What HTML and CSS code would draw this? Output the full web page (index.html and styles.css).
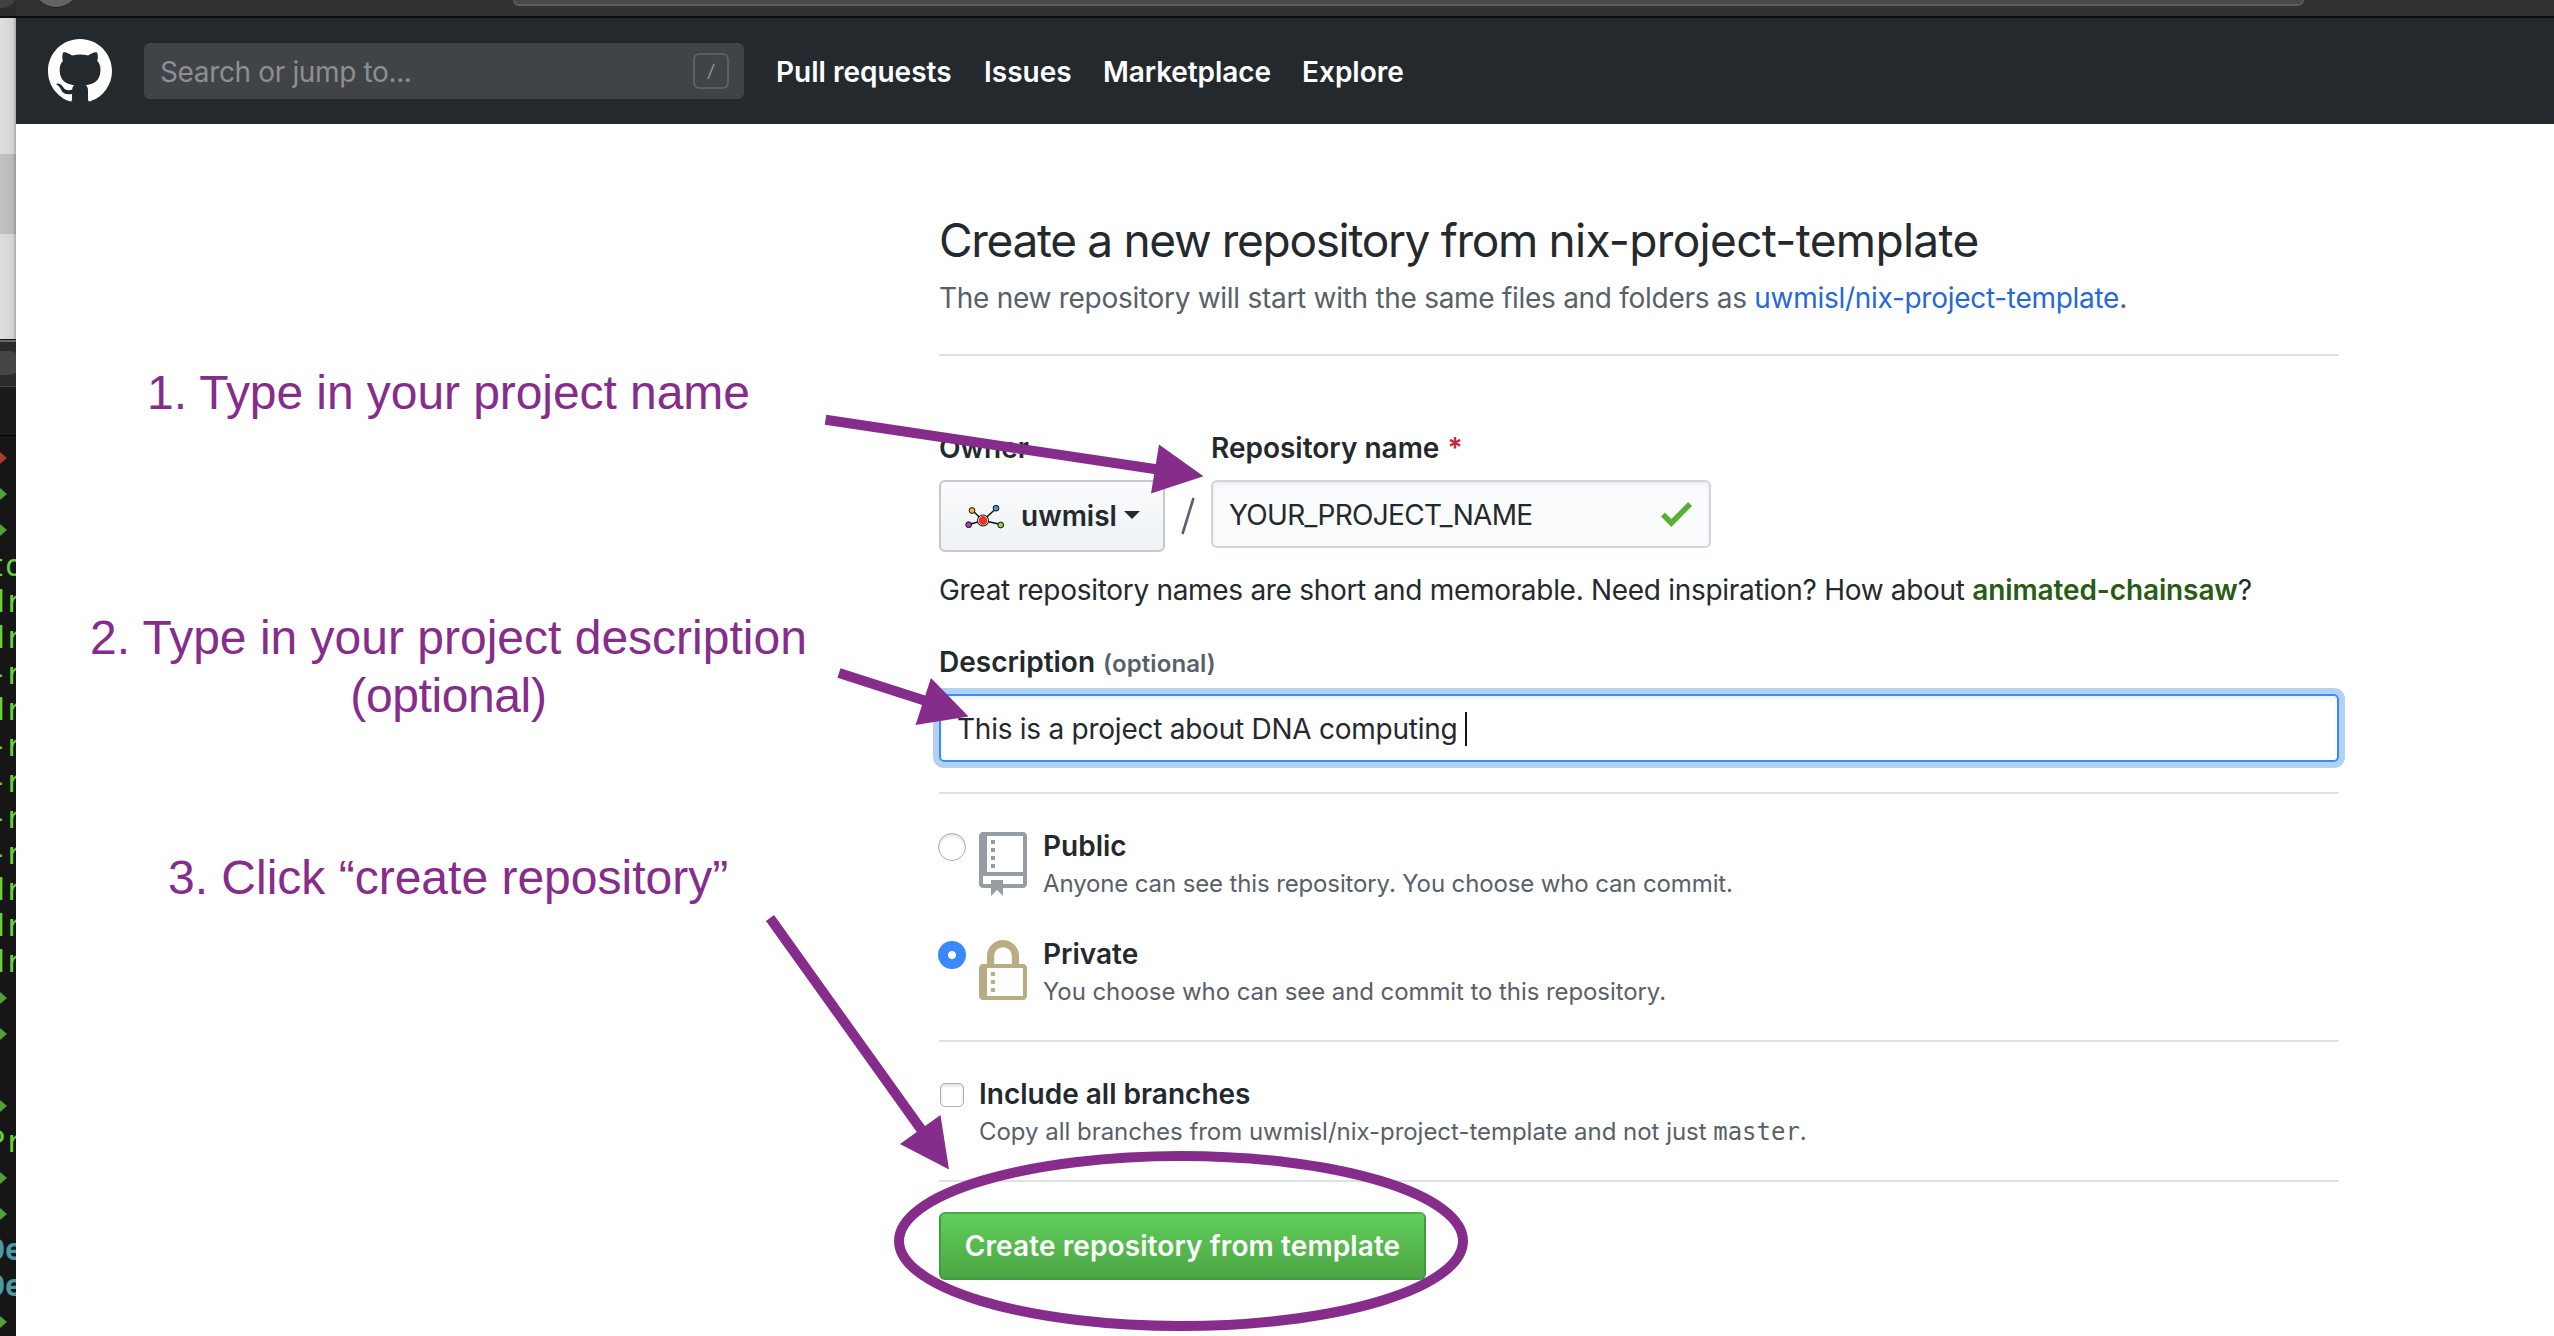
FILE: index.html
```html
<!DOCTYPE html>
<html lang="en">
<head>
<meta charset="utf-8">
<title>Create a new repository from nix-project-template</title>
<link rel="stylesheet" href="styles.css">
</head>
<body>
<div class="desktop">
  <aside class="behind">
    <div class="behind-toolbar"><span class="behind-knob"></span></div>
    <div class="behind-list"><div class="behind-selected"></div></div>
    <div class="term-title"><span class="term-knob"></span></div>
    <div class="term-tabs"></div>
    <div class="terminal">
      <div class="line"><i class="mark red"></i></div>
      <div class="line"><i class="mark"></i></div>
      <div class="line"><i class="mark"></i></div>
      <div class="line">to</div>
      <div class="line">dr</div>
      <div class="line">dr</div>
      <div class="line dash">-r</div>
      <div class="line">dr</div>
      <div class="line dash">-r</div>
      <div class="line dash">-r</div>
      <div class="line dash">-r</div>
      <div class="line dash">-r</div>
      <div class="line">dr</div>
      <div class="line">dr</div>
      <div class="line">dr</div>
      <div class="line"><i class="mark"></i></div>
      <div class="line"><i class="mark"></i></div>
      <div class="line"></div>
      <div class="line"><i class="mark"></i></div>
      <div class="line">Pr</div>
      <div class="line"><i class="mark"></i></div>
      <div class="line"><i class="mark"></i></div>
      <div class="line blue">De</div>
      <div class="line blue">De</div>
      <div class="line"><i class="mark"></i></div>
    </div>
  </aside>

  <div class="window">
    <div class="chrome"><span class="chrome-button"></span><span class="address"></span></div>
    <header class="header">
      <svg class="logo" viewBox="0 0 16 16"><path fill="#fff" d="M8 0C3.58 0 0 3.58 0 8c0 3.54 2.29 6.53 5.47 7.59.4.07.55-.17.55-.38 0-.19-.01-.82-.01-1.49-2.01.37-2.53-.49-2.69-.94-.09-.23-.48-.94-.82-1.13-.28-.15-.68-.52-.01-.53.63-.01 1.08.58 1.23.82.72 1.21 1.87.87 2.33.66.07-.52.28-.87.51-1.07-1.78-.2-3.64-.89-3.64-3.95 0-.87.31-1.59.82-2.15-.08-.2-.36-1.02.08-2.12 0 0 .67-.21 2.2.82.64-.18 1.32-.27 2-.27.68 0 1.36.09 2 .27 1.53-1.04 2.2-.82 2.2-.82.44 1.1.16 1.92.08 2.12.51.56.82 1.27.82 2.15 0 3.07-1.87 3.75-3.65 3.95.29.25.54.73.54 1.48 0 1.07-.01 1.93-.01 2.2 0 .21.15.46.55.38A8.013 8.013 0 0 0 16 8c0-4.42-3.58-8-8-8z"/></svg>
      <div class="search">
        <span class="search-text">Search or jump to...</span>
        <svg class="slash-key" viewBox="0 0 36 36"><rect x="1" y="1" width="34" height="34" rx="5" fill="none" stroke="#63676b" stroke-width="1.6"/><path d="M21 11l-6 15" stroke="#8b8e91" stroke-width="1.6"/></svg>
      </div>
      <nav class="nav">
        <a class="nav-pulls">Pull requests</a>
        <a class="nav-issues">Issues</a>
        <a class="nav-market">Marketplace</a>
        <a class="nav-explore">Explore</a>
      </nav>
    </header>

    <main class="main">
      <h1 class="title">Create a new repository from <span class="title-repo">nix-project-template</span></h1>
      <p class="subtitle">The new repository will start with the same files and folders as <a class="link">uwmisl/nix-project-template</a>.</p>
      <hr class="rule rule-top">

      <div class="fields">
        <div class="field owner">
          <label class="label">Owner</label>
          <div class="owner-row">
            <button class="owner-button">
              <svg class="avatar" viewBox="0 0 40 26">
                <path d="M7.500 6.500L18 16.500L31 4.500M4 20.500L18 16.500L36 20.500" fill="none" stroke="#111" stroke-width="1.400"/>
                <circle cx="18" cy="16.500" r="6" fill="#111"/>
                <circle cx="18" cy="16.500" r="5.100" fill="#fff"/>
                <circle cx="18" cy="16.500" r="4.400" fill="#ee3524"/>
                <circle cx="7" cy="6.500" r="2.900" fill="#f0b93a" stroke="#111" stroke-width="1"/>
                <circle cx="31" cy="4.200" r="2.900" fill="#4298e0" stroke="#111" stroke-width="1"/>
                <circle cx="3.700" cy="20.700" r="2.900" fill="#b13aa3" stroke="#111" stroke-width="1"/>
                <circle cx="35.700" cy="21" r="2.900" fill="#92d33c" stroke="#111" stroke-width="1"/>
              </svg>
              <span class="owner-name">uwmisl</span>
              <span class="caret"></span>
            </button>
            <svg class="separator" viewBox="0 0 14 38"><path d="M12.500 1L1.500 37" stroke="#586069" stroke-width="2.600"/></svg>
          </div>
        </div>
        <div class="field">
          <label class="label">Repository name <span class="required">*</span></label>
          <div class="name-input">
            <span>YOUR_PROJECT_NAME</span>
            <svg class="check" viewBox="0 3.500 12 9.500" preserveAspectRatio="none"><path fill="#59b134" d="M12 5l-8 8-4-4 1.500-1.500L4 10l6.500-6.500L12 5z"/></svg>
          </div>
        </div>
      </div>
      <p class="hint">Great repository names are short and memorable. Need inspiration? How about <strong class="suggestion">animated-chainsaw</strong>?</p>

      <label class="label label-description">Description <span class="optional">(optional)</span></label>
      <div class="description-input"><span>This is a project about DNA computing</span><i class="cursor"></i></div>
      <hr class="rule">

      <div class="option">
        <span class="radio"></span>
        <svg class="option-icon" viewBox="0 0 12 16"><path fill="#959da5" d="M4 9H3V8h1v1zm0-3H3v1h1V6zm0-2H3v1h1V4zm0-2H3v1h1V2zm8-1v12c0 .55-.45 1-1 1H6v2l-1.500-1.500L3 16v-2H1c-.55 0-1-.45-1-1V1c0-.55.45-1 1-1h10c.55 0 1 .45 1 1zm-1 10H1v2h2v-1h3v1h5v-2zm0-10H2v9h9V1z"/></svg>
        <div>
          <div class="option-title">Public</div>
          <div class="option-note note-public">Anyone can see this repository. You choose who can commit.</div>
        </div>
      </div>
      <div class="option">
        <span class="radio checked"></span>
        <svg class="option-icon" viewBox="0 0 12 16"><path fill="#b9ac82" d="M4 13H3v-1h1v1zm8-6v7c0 .55-.45 1-1 1H1c-.55 0-1-.45-1-1V7c0-.55.45-1 1-1h1V4c0-2.200 1.800-4 4-4s4 1.800 4 4v2h1c.55 0 1 .45 1 1zM3.800 6h4.410V4c0-1.220-.98-2.200-2.200-2.200-1.220 0-2.200.98-2.200 2.200v2H3.800zM11 7H2v7h9V7zM4 8H3v1h1V8zm0 2H3v1h1v-1z"/></svg>
        <div>
          <div class="option-title">Private</div>
          <div class="option-note note-private">You choose who can see and commit to this repository.</div>
        </div>
      </div>
      <hr class="rule">

      <div class="option">
        <span class="checkbox"></span>
        <div>
          <div class="option-title">Include all branches</div>
          <div class="option-note note-branches">Copy all branches from uwmisl/nix-project-template and not just <code class="code">master</code>.</div>
        </div>
      </div>
      <hr class="rule">
      <button class="submit">Create repository from template</button>
    </main>
  </div>
</div>

<svg class="overlay" viewBox="0 0 2554 1336">
  <g fill="none" stroke="#862d8c" stroke-width="10">
    <path d="M825.500 419.700L1158 469.500"/>
    <path d="M839 673L926 701"/>
    <path d="M770 918L923 1132"/>
    <ellipse cx="1181" cy="1241" rx="282" ry="85"/>
  </g>
  <g fill="#862d8c">
    <path d="M1203.500 476.300L1159 444.500L1151 493.500Z"/>
    <path d="M968.500 716.500L931 678L915.500 725Z"/>
    <path d="M949 1169.500L940.500 1115L900 1144Z"/>
  </g>
</svg>
<div class="step step-name">1. Type in your project name</div>
<div class="step step-description">2. Type in your project description<br><span class="step-optional">(optional)</span></div>
<div class="step step-create">3. Click “create repository”</div>
</body>
</html>
```

FILE: styles.css
```css
* { box-sizing: border-box; }
body { margin: 0; width: 2554px; height: 1336px; overflow: hidden; position: relative; background: #fff; color: #24292e; font: 28px/42px Inter, sans-serif; }
h1, p { margin: 0; font-weight: 400; }
button { margin: 0; font: inherit; color: inherit; }
label { display: block; }
svg { display: block; flex: none; }
.desktop { display: flex; height: 1336px; }

/* windows peeking out behind the browser */
.behind { width: 16px; flex: none; overflow: hidden; background: #161616; }
.behind-toolbar { height: 18px; background: #2c2c2d; border-bottom: 2px solid #0c0d0e; overflow: hidden; }
.behind-knob { display: block; width: 30px; height: 24px; margin: -16px 0 0 -14px; border-radius: 50%; background: #414142; }
.behind-list { height: 321px; padding-top: 136px; background: linear-gradient(90deg, #dedede, #d3d3d3 80%, #a8a8a8); }
.behind-selected { height: 80px; background: linear-gradient(90deg, #c3c3c3, #b8b8b8 80%, #949494); }
.term-title { height: 47px; padding: 9px 0 0 1px; background: #292b2d; border-top: 2px solid #66686a; border-bottom: 1px solid #45474a; margin-top: 1px; }
.term-knob { display: block; width: 32px; height: 24px; margin-left: -12px; border-radius: 12px; background: #434547; }
.term-tabs { height: 49px; background: #191b1d; border-bottom: 1px solid #000; }
.terminal { padding-top: 4px; color: #64d23b; font: 30px/36px "DejaVu Sans Mono", monospace; }
.line { display: flex; align-items: center; height: 36px; margin-left: -13px; white-space: nowrap; }
.dash { margin-left: -11px; letter-spacing: -2px; }
.mark { width: 20px; height: 12px; background: #54a038; clip-path: polygon(0 0, 65% 0, 100% 50%, 65% 100%, 0 100%); }
.red { background: #a73c29; }
.blue { color: #4b98a8; font-weight: 700; }

/* browser window */
.window { flex: 1; min-width: 0; background: #fff; }
.chrome { display: flex; align-items: flex-start; height: 18px; padding-left: 16px; background: #323234; border-bottom: 2px solid #0b0d0f; overflow: hidden; }
.chrome-button { width: 48px; height: 48px; margin-top: -40px; border-radius: 50%; background: #646465; border: 1px solid #222; }
.address { width: 1791px; height: 30px; margin: -24px 0 0 433px; border-radius: 6px; background: #48484a; border: 2px solid #5b5b5d; }
.header { display: flex; align-items: center; height: 106px; padding-left: 32px; background: #24292e; }
.logo { width: 64px; height: 64px; }
.search { display: flex; align-items: center; justify-content: space-between; width: 600px; height: 56px; margin-left: 32px; padding: 0 15px 0 16px; border-radius: 6px; background: #404448; color: #8c8f92; letter-spacing: -.36px; }
.search-text { padding-top: 1px; }
.slash-key { width: 36px; height: 36px; }
.nav { display: flex; margin-left: 32px; padding-top: 2px; color: #fff; font-weight: 600; white-space: nowrap; }
.nav a { flex: none; }
.nav-pulls { width: 208px; }
.nav-issues { width: 119px; }
.nav-market { width: 199px; letter-spacing: -.1px; }

.main { width: 1400px; margin-left: 923px; }
.title { padding-top: 86px; font-size: 46px; line-height: 61px; letter-spacing: -1.33px; }
.title-repo { letter-spacing: -.68px; }
.subtitle { margin-top: 6px; color: #586069; letter-spacing: -.285px; }
.link { color: #2768d8; }
.rule { height: 2px; margin: 30px 0 0; border: 0; background: #dfe2e5; }
.rule-top { margin-top: 35px; }

.fields { display: flex; margin-top: 71px; }
.owner { width: 272px; }
.label { height: 42px; font-weight: 600; }
.required { color: #cb2431; margin-left: 1px; }
.owner-row { display: flex; align-items: flex-start; margin-top: 11px; }
.owner-button { display: flex; align-items: center; width: 226px; height: 72px; padding: 0 0 0 24px; border: 2px solid #c5c9cd; border-radius: 6px; background: linear-gradient(#fafbfc, #eff3f6 90%); font-weight: 600; }
.avatar { width: 40px; height: 26px; margin-top: 2px; }
.owner-name { margin: -1px 0 0 16px; }
.caret { margin: -2px 0 0 7px; border: 8px solid transparent; border-top-color: #24292e; border-bottom: 0; }
.separator { width: 14px; height: 38px; margin: 17px 0 0 16px; }
.name-input { display: flex; align-items: center; justify-content: space-between; width: 500px; height: 68px; margin-top: 11px; padding: 1px 17px 0 16px; border: 2px solid #d1d5da; border-radius: 6px; background: #fafbfc; box-shadow: inset 0 2px 4px rgba(27, 31, 35, .075); letter-spacing: -.7px; }
.check { width: 31px; height: 25px; }
.hint { margin-top: 17px; letter-spacing: -.298px; white-space: nowrap; }
.suggestion { color: #285c14; font-weight: 600; letter-spacing: -.12px; }

.label-description { margin-top: 30px; }
.optional { margin-left: 1px; color: #586069; font-size: 24px; letter-spacing: .1px; }
.description-input { display: flex; align-items: center; height: 68px; margin-top: 11px; padding: 1px 0 0 16px; border: 2px solid #388bfd; border-radius: 5px; box-shadow: inset 0 2px 4px rgba(27, 31, 35, .075), 0 0 0 6px #b3d1f3; letter-spacing: -.25px; }
.cursor { width: 2px; height: 34px; margin-left: 8px; background: #111; }

.option { display: flex; align-items: flex-start; margin-top: 34px; }
.radio { flex: none; width: 28px; height: 28px; margin: 5px 13px 0 -1px; border: 1.500px solid #acacac; border-radius: 50%; box-shadow: inset 0 2px 3px rgba(0, 0, 0, .12); }
.checked { border: 0; background: radial-gradient(circle, #fff 3.500px, #3b88fd 4.500px); box-shadow: none; }
.option-icon { width: 48px; height: 64px; margin: 4px 16px -4px 0; }
.option-title { font-weight: 600; line-height: 36px; }
.option-note { height: 36px; margin-top: 2px; color: #586069; font-size: 24px; line-height: 36px; white-space: nowrap; }
.note-public { letter-spacing: -.13px; }
.note-private { letter-spacing: -.08px; }
.note-branches { letter-spacing: -.03px; }
.checkbox { flex: none; width: 24px; height: 24px; margin: 7px 15px 0 1px; border: 1.500px solid #acacac; border-radius: 5px; box-shadow: inset 0 2px 3px rgba(0, 0, 0, .12); }
.code { font: 24px/1 "DejaVu Sans Mono", monospace; }
.submit { display: block; width: 487px; height: 68px; margin-top: 30px; padding: 0; border: 2px solid #429a41; border-top-color: #4bac47; border-radius: 6px; background: linear-gradient(#60cf5a, #4ca544); color: #fff; font-weight: 600; white-space: nowrap; letter-spacing: .1px; }

/* tutorial annotations drawn over the page */
.overlay { position: absolute; left: 0; top: 0; width: 2554px; height: 1336px; }
.step { position: absolute; color: #862d8c; font: 48px/58px "Liberation Sans", Arial, sans-serif; text-align: center; white-space: nowrap; }
.step-name { left: 147px; top: 364px; letter-spacing: -.07px; }
.step-description { left: 90px; top: 609px; }
.step-optional { letter-spacing: -.4px; }
.step-create { left: 168px; top: 849px; }
```
